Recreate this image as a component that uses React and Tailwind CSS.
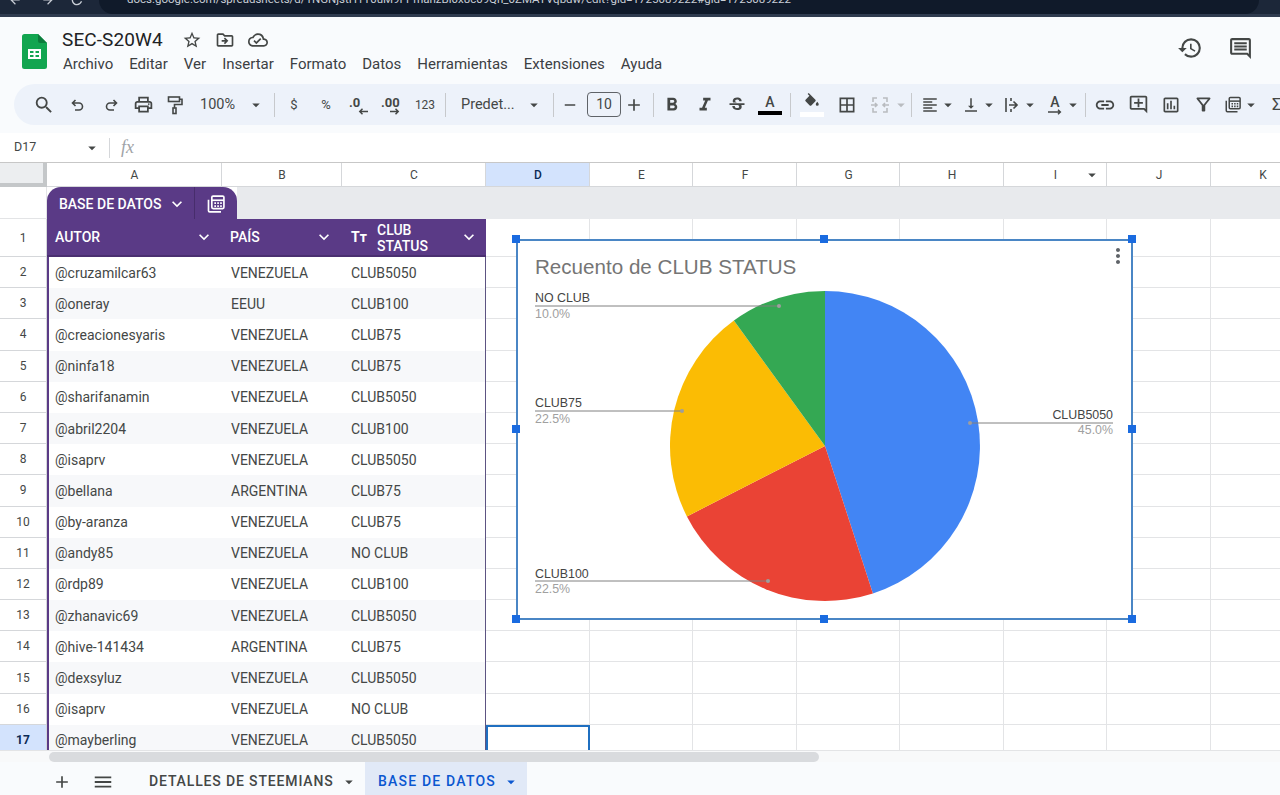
import React from 'react';
import {
  MdSearch, MdOutlinePrint, MdArrowDropDown, MdAdd, MdRemove,
  MdFormatBold, MdFormatItalic, MdStrikethroughS, MdBorderAll, MdFormatAlignLeft, MdVerticalAlignBottom,
  MdLink, MdOutlineAddComment, MdOutlineInsertChart, MdOutlineFilterAlt, MdHistory, MdOutlineComment,
  MdStarBorder, MdOutlineDriveFileMove, MdOutlineCloudDone, MdMenu, MdKeyboardArrowDown, MdMoreVert,
  MdArrowBack, MdArrowForward, MdRefresh,
} from 'react-icons/md';

const Sep = ({ cls = '' }) => (
  <div className={`w-[3px] h-full flex items-center justify-center shrink-0 ${cls}`}>
    <div className="w-px h-[24px] bg-[#c7c9cc]" />
  </div>
);

const B = ({ w, children, cls = '' }) => (
  <div className={`h-full flex items-center justify-center shrink-0 text-[#444746] ${w} ${cls}`}>{children}</div>
);

const Arrow = ({ color = 'text-[#444746]' }) => <MdArrowDropDown size={18} className={`shrink-0 ${color}`} />;

const Group = ({ children, cls = '' }) => (
  <div className={`h-full flex items-center w-[36px] shrink-0 text-[#444746] ${cls}`}>
    <div className="w-[18px] flex justify-center shrink-0">{children}</div>
    <Arrow />
  </div>
);

const FuncIcon = ({ size = 20 }) => (
  <svg width={size} height={size} viewBox="0 0 24 24" fill="none" stroke="currentColor" strokeWidth="2">
    <path d="M3 7v13a1.5 1.5 0 0 0 1.5 1.5H18" />
    <rect x="7" y="2.5" width="14.5" height="15" rx="1.5" />
    <path d="M7 7.5h14.5" />
    <path d="M10 11h2M13.5 11h2M17 11h2M10 14.5h2M13.5 14.5h2M17 14.5h2" strokeWidth="2.2" />
  </svg>
);

const UndoIcon = () => (
  <svg width="18" height="18" viewBox="0 0 18 18" fill="none" stroke="currentColor" strokeWidth="1.6">
    <path d="M6.5 4 3.5 7l3 3M3.5 7h6.5a3.5 3.5 0 0 1 0 7H6" />
  </svg>
);
const RedoIcon = () => (
  <svg width="18" height="18" viewBox="0 0 18 18" fill="none" stroke="currentColor" strokeWidth="1.6">
    <path d="M11.5 4l3 3-3 3M14.5 7H8a3.5 3.5 0 0 0 0 7h4" />
  </svg>
);
const RollerIcon = () => (
  <svg width="20" height="20" viewBox="0 0 20 20" fill="none" stroke="currentColor" strokeWidth="1.6">
    <rect x="3.5" y="2" width="11" height="4.5" />
    <path d="M14.5 4.2h2.5v5.3H9.5v3.5" />
    <rect x="8" y="13" width="3" height="5.5" />
  </svg>
);

const DecLess = () => (
  <div className="relative w-[20px] h-[20px] text-[#444746]">
    <span className="absolute left-0 top-0 text-[13px] leading-[16px] font-bold">.0</span>
    <svg className="absolute left-[9px] top-[13px]" width="10" height="7" viewBox="0 0 10 7" fill="none" stroke="currentColor" strokeWidth="1.5"><path d="M10 3.5H2M4.5 .8 1.8 3.5l2.7 2.7" /></svg>
  </div>
);
const DecMore = () => (
  <div className="relative w-[20px] h-[20px] text-[#444746]">
    <span className="absolute -left-px top-0 text-[13px] leading-[16px] font-bold">.00</span>
    <svg className="absolute left-[8px] top-[13px]" width="10" height="7" viewBox="0 0 10 7" fill="none" stroke="currentColor" strokeWidth="1.5"><path d="M0 3.5h8M5.5 .8l2.7 2.7-2.7 2.7" /></svg>
  </div>
);

const MergeIcon = () => (
  <svg width="20" height="20" viewBox="0 0 20 20" fill="none" stroke="#b9bcc0" strokeWidth="1.6">
    <path d="M7 3H3v4M13 3h4v4M7 17H3v-4M13 17h4v-4M1 10h6M5 8l2 2-2 2M19 10h-6M15 8l-2 2 2 2" />
  </svg>
);
const WrapIcon = () => (
  <svg width="18" height="18" viewBox="0 0 18 18" fill="none" stroke="currentColor" strokeWidth="1.6">
    <path d="M3 2v14M6 9h8M10.5 5.5 14 9l-3.5 3.5M8 2v3M8 13v3" />
  </svg>
);
const RotateIcon = () => (
  <div className="relative w-[18px] h-[20px] flex justify-center">
    <span className="text-[14px] leading-[15px] font-medium">A</span>
    <svg className="absolute left-[2px] top-[14px]" width="16" height="6" viewBox="0 0 16 6" fill="none" stroke="currentColor" strokeWidth="1.4"><path d="M0 3h12M10 .8 12.4 3 10 5.2" /></svg>
  </div>
);
const FillIcon = () => (
  <div className="flex flex-col items-center">
    <svg width="18" height="18" viewBox="0 0 24 24" fill="#444746">
      <path d="M16.56 8.94 7.62 0 6.21 1.41l2.38 2.38-5.15 5.15a1.49 1.49 0 0 0 0 2.12l5.5 5.5c.29.29.68.44 1.06.44s.77-.15 1.06-.44l5.5-5.5c.59-.58.59-1.53 0-2.12zM19 11.5s-2 2.17-2 3.5a2 2 0 0 0 4 0c0-1.33-2-3.5-2-3.5z" />
    </svg>
    <div className="w-[24px] h-[5px] bg-white mt-[1px]" />
  </div>
);

const Toolbar = () => (
  <div className="ml-[14px] h-[41px] bg-[#edf2fa] rounded-l-full flex items-center pl-[13px] text-[#444746] shrink-0">
    <B w="w-[34px]"><MdSearch size={22} /></B>
    <B w="w-[33px]"><UndoIcon /></B>
    <B w="w-[33px]"><RedoIcon /></B>
    <B w="w-[33px]"><MdOutlinePrint size={21} /></B>
    <B w="w-[30px]"><RollerIcon /></B>
    <B w="w-[49px]" cls="pl-[10px] text-[14.5px] !justify-start">100%</B>
    <B w="w-[34px]"><Arrow /></B>
    <Sep />
    <B w="w-[36px]" cls="text-[13px]">$</B>
    <B w="w-[28px]" cls="text-[13px]">%</B>
    <B w="w-[38px]"><DecLess /></B>
    <B w="w-[28px]"><DecMore /></B>
    <B w="w-[38px]" cls="text-[12px]">123</B>
    <Sep />
    <B w="w-[78px]" cls="pl-[14px] text-[14.5px] !justify-start">Predet...</B>
    <B w="w-[18px]"><Arrow /></B>
    <Sep cls="ml-[9px]" />
    <B w="w-[30px]"><MdRemove size={18} /></B>
    <div className="ml-[2px] w-[34px] h-[25px] border border-[#5f6368] rounded-[4px] flex items-center justify-center text-[14px] shrink-0">10</div>
    <B w="w-[26px]"><MdAdd size={20} /></B>
    <Sep cls="ml-[5px]" />
    <B w="w-[34px]"><MdFormatBold size={22} /></B>
    <B w="w-[32px]"><MdFormatItalic size={22} /></B>
    <B w="w-[32px]"><MdStrikethroughS size={20} /></B>
    <B w="w-[34px]">
      <div className="flex flex-col items-center">
        <span className="text-[14px] leading-[15px] font-medium">A</span>
        <div className="w-[24px] h-[4px] bg-black mt-[1px]" />
      </div>
    </B>
    <Sep cls="ml-[2px]" />
    <B w="w-[40px]"><FillIcon /></B>
    <B w="w-[30px]"><MdBorderAll size={20} /></B>
    <B w="w-[35px]"><MergeIcon /></B>
    <B w="w-[8px]"><Arrow color="text-[#b9bcc0]" /></B>
    <Sep cls="ml-[5px]" />
    <Group cls="ml-[8px]"><MdFormatAlignLeft size={20} /></Group>
    <Group cls="ml-[5px]"><MdVerticalAlignBottom size={20} /></Group>
    <Group cls="ml-[5px]"><WrapIcon /></Group>
    <Group cls="ml-[7px]"><RotateIcon /></Group>
    <Sep cls="ml-[2px]" />
    <B w="w-[35px]"><MdLink size={22} /></B>
    <B w="w-[32px]"><MdOutlineAddComment size={21} /></B>
    <B w="w-[33px]"><MdOutlineInsertChart size={20} /></B>
    <B w="w-[32px]"><MdOutlineFilterAlt size={21} /></B>
    <Group cls="ml-[5px]"><FuncIcon size={19} /></Group>
    <B w="w-[30px]" cls="pl-[12px] !justify-start text-[17px]">Σ</B>
  </div>
);

const columns = ['A', 'B', 'C', 'D', 'E', 'F', 'G', 'H', 'I', 'J', 'K'];
const gridCols = 'grid grid-cols-[47px_175px_120px_144px_104px_103px_104px_103px_104px_103px_104px_104px] w-[1313px]';

const rows = [
  ['@cruzamilcar63', 'VENEZUELA', 'CLUB5050'],
  ['@oneray', 'EEUU', 'CLUB100'],
  ['@creacionesyaris', 'VENEZUELA', 'CLUB75'],
  ['@ninfa18', 'VENEZUELA', 'CLUB75'],
  ['@sharifanamin', 'VENEZUELA', 'CLUB5050'],
  ['@abril2204', 'VENEZUELA', 'CLUB100'],
  ['@isaprv', 'VENEZUELA', 'CLUB5050'],
  ['@bellana', 'ARGENTINA', 'CLUB75'],
  ['@by-aranza', 'VENEZUELA', 'CLUB75'],
  ['@andy85', 'VENEZUELA', 'NO CLUB'],
  ['@rdp89', 'VENEZUELA', 'CLUB100'],
  ['@zhanavic69', 'VENEZUELA', 'CLUB5050'],
  ['@hive-141434', 'ARGENTINA', 'CLUB75'],
  ['@dexsyluz', 'VENEZUELA', 'CLUB5050'],
  ['@isaprv', 'VENEZUELA', 'NO CLUB'],
  ['@mayberling', 'VENEZUELA', 'CLUB5050'],
];

const cellLine = 'border-r border-b border-[#e3e4e6]';

const ColumnHeader = () => (
  <div className={`${gridCols} h-[25px] border-t border-[#c7c7c7] bg-white text-[12px] text-[#444746]`}>
    <div className="bg-[#eceef0] border-r-[4px] border-b-[4px] border-[#c4c7c9]" />
    {columns.map((c) => (
      <div
        key={c}
        className={`relative flex items-center justify-center pl-px border-r border-b border-[#d5d7da] ${c === 'D' ? 'bg-[#d3e3fd] font-medium text-[#0b2a55]' : ''}`}
      >
        {c}
        {c === 'I' && <MdArrowDropDown size={18} className="absolute right-[5px] top-[3px]" />}
      </div>
    ))}
  </div>
);

const EmptyCells = ({ selected }) => (
  <>
    <div className={selected ? 'border-2 border-[#1f6fc0]' : cellLine} />
    {[0, 1, 2, 3, 4, 5, 6].map((i) => <div key={i} className={cellLine} />)}
  </>
);

const HeaderCell = ({ label, cls = '', chevron }) => (
  <div className={`bg-[#5a3a86] border-b-2 border-[#4a2f70] flex items-center text-white text-[14px] font-medium ${cls}`}>
    <span className="pt-px">{label}</span>
    <MdKeyboardArrowDown size={20} className={`ml-auto ${chevron}`} />
  </div>
);

const Chart = () => {
  const handles = [
    'left-[-6px] top-[-6px]', 'left-[302px] top-[-6px]', 'right-[-5px] top-[-6px]',
    'left-[-6px] top-[184px]', 'right-[-5px] top-[184px]',
    'left-[-6px] bottom-[-5px]', 'left-[302px] bottom-[-5px]', 'right-[-5px] bottom-[-5px]',
  ];
  const lbl = { fontFamily: '"Liberation Sans", Arial, sans-serif', fontSize: 12.4 };
  return (
    <div className="absolute left-[516px] top-[52px] w-[617px] h-[381px] bg-white border-2 border-[#4a86c5]">
      <svg width="613" height="377" viewBox="518 241 613 377" className="block">
        <text x="535" y="274" fill="#757575" style={{ fontFamily: '"Liberation Sans", Arial, sans-serif', fontSize: 20.6 }}>Recuento de CLUB STATUS</text>
        <path d="M825 446V291A155 155 0 0 1 872.9 593.4Z" fill="#4285f4" />
        <path d="M825 446 872.9 593.4A155 155 0 0 1 686.9 516.4Z" fill="#ea4335" />
        <path d="M825 446 686.9 516.4A155 155 0 0 1 733.9 320.6Z" fill="#fbbc04" />
        <path d="M825 446 733.9 320.6A155 155 0 0 1 825 291Z" fill="#34a853" />

        <path d="M535 306H779" stroke="#808080" strokeWidth="1" />
        <circle cx="779" cy="306" r="2" fill="#9e9e9e" />
        <text x="535" y="302" fill="#444" style={lbl}>NO CLUB</text>
        <text x="535" y="318" fill="#a0a0a0" style={lbl}>10.0%</text>

        <path d="M535 411H682" stroke="#808080" strokeWidth="1" />
        <circle cx="682" cy="411" r="2" fill="#9e9e9e" />
        <text x="535" y="407" fill="#444" style={lbl}>CLUB75</text>
        <text x="535" y="423" fill="#a0a0a0" style={lbl}>22.5%</text>

        <path d="M535 581H768" stroke="#808080" strokeWidth="1" />
        <circle cx="768" cy="581" r="2" fill="#9e9e9e" />
        <text x="535" y="578" fill="#444" style={lbl}>CLUB100</text>
        <text x="535" y="593" fill="#a0a0a0" style={lbl}>22.5%</text>

        <path d="M970 423H1113" stroke="#808080" strokeWidth="1" />
        <circle cx="970" cy="423" r="2" fill="#9e9e9e" />
        <text x="1113" y="419" textAnchor="end" fill="#444" style={lbl}>CLUB5050</text>
        <text x="1113" y="434" textAnchor="end" fill="#a0a0a0" style={lbl}>45.0%</text>
      </svg>
      <MdMoreVert size={24} className="absolute right-[1px] top-[3px] text-[#5f6368]" />
      {handles.map((h) => (
        <span key={h} className={`absolute w-[8px] h-[8px] bg-[#1a6be0] ${h}`} />
      ))}
    </div>
  );
};

export default function App() {
  return (
    <div className="w-[1280px] h-[795px] overflow-hidden bg-[#f9fbfd] flex flex-col font-['Roboto',sans-serif] text-[#444746]">
      {/* browser chrome, cut off at the top */}
      <div className="h-[17px] bg-[#1c2739] border-b-[3px] border-[#2f3b4f] overflow-hidden shrink-0">
        <div className="h-[28px] -mt-[14px] flex items-center text-[#c9ced6]">
          <MdArrowBack size={14} className="ml-[8px]" />
          <MdArrowForward size={14} className="ml-[19px]" />
          <MdRefresh size={16} className="ml-[14px]" />
          <div className="ml-[14px] w-[1160px] h-[28px] bg-[#101a2a] rounded-full pl-[28px] flex items-center text-[11.5px] whitespace-nowrap">
            docs.google.com/spreadsheets/d/1NGNjstH1T0uM9FPmanzBl0x8c09Qn_0ZMAYVqbdw/edit?gid=1725089222#gid=1725089222
          </div>
        </div>
      </div>

      {/* title and menu */}
      <div className="h-[67px] pt-[11px] flex shrink-0">
        <svg className="ml-[22px] mt-[6px] shrink-0" width="25" height="35" viewBox="0 0 25 35">
          <path d="M2.5 0H16l9 9v23.5a2.5 2.5 0 0 1-2.5 2.5h-20A2.5 2.5 0 0 1 0 32.5v-30A2.5 2.5 0 0 1 2.5 0z" fill="#12a550" />
          <path d="M16 0l9 9h-7a2 2 0 0 1-2-2z" fill="#0c7c3c" />
          <path d="M6 15h13v10H6zm2 2v2h3.5v-2zm5.5 0v2H17v-2zM8 21v2h3.5v-2zm5.5 0v2H17v-2z" fill="#fff" fillRule="evenodd" />
        </svg>
        <div className="ml-[15px]">
          <div className="h-[24px] flex items-center text-[#202124]">
            <span className="text-[19px] w-[120px] tracking-[0.1px]">SEC-S20W4</span>
            <MdStarBorder size={20} className="text-[#444746]" />
            <MdOutlineDriveFileMove size={20} className="ml-[13px] text-[#444746]" />
            <MdOutlineCloudDone size={20} className="ml-[13px] text-[#444746]" />
          </div>
          <div className="h-[24px] flex items-center gap-[16px] pl-px pt-px text-[15px] text-[#3c4043]">
            {['Archivo', 'Editar', 'Ver', 'Insertar', 'Formato', 'Datos', 'Herramientas', 'Extensiones', 'Ayuda'].map((m) => (
              <span key={m}>{m}</span>
            ))}
          </div>
        </div>
        <div className="ml-auto flex h-[40px] items-center gap-[25px] pr-[27px] text-[#444746]">
          <MdHistory size={26} />
          <MdOutlineComment size={25} />
        </div>
      </div>

      <Toolbar />
      <div className="h-[8px] shrink-0" />

      {/* formula bar */}
      <div className="h-[29px] bg-white flex items-center shrink-0 text-[#444746]">
        <span className="ml-[14px] w-[69px] text-[12.5px]">D17</span>
        <MdArrowDropDown size={18} className="shrink-0" />
        <div className="ml-[8px] w-px h-[20px] bg-[#d5d7da]" />
        <span className="ml-[11px] font-['Liberation_Serif',serif] italic text-[18px] text-[#a0a3a7]">fx</span>
      </div>

      <ColumnHeader />

      {/* sheet */}
      <div className="relative h-[563px] overflow-hidden bg-white shrink-0">
        <div className="h-[32px] flex">
          <div className="w-[47px] border-b border-[#e3e4e6] border-r" />
          <div className="w-[190px] bg-[#5a3a86] rounded-t-[14px] flex text-white">
            <div className="w-[148px] flex items-center pl-[12px] pt-[2px] text-[14px] font-medium border-r border-[#472d6c]">
              BASE DE DATOS
              <MdKeyboardArrowDown size={20} className="ml-auto mr-[7px]" />
            </div>
            <div className="flex-1 flex items-center justify-center pt-[2px]"><FuncIcon size={20} /></div>
          </div>
          <div className="flex-1 bg-[#e8eaed]" />
        </div>

        <div className={`${gridCols} h-[38px]`}>
          <div className="flex items-center justify-center text-[12px] border-r border-b border-[#d5d7da]">1</div>
          <HeaderCell label="AUTOR" cls="pl-[8px]" chevron="mr-[8px]" />
          <HeaderCell label="PAÍS" cls="pl-[8px]" chevron="mr-[8px]" />
          <div className="bg-[#5a3a86] border-b-2 border-[#4a2f70] flex items-center text-white text-[14px] font-medium">
            <span className="ml-[9px] text-[14px] font-bold w-[26px]">Tт</span>
            <span className="leading-[16px] w-[60px] pt-px">CLUB STATUS</span>
            <MdKeyboardArrowDown size={20} className="ml-auto mr-[7px]" />
          </div>
          <EmptyCells />
        </div>

        {rows.map((r, i) => {
          const n = i + 2;
          const alt = i % 2 === 1;
          const last = n === 17;
          return (
            <div key={n} className={`${gridCols} h-[31.2px]`}>
              <div className={`flex items-center justify-center text-[12px] border-r border-b border-[#d5d7da] ${last ? 'bg-[#d3e3fd] font-bold text-[#0b2a55]' : ''}`}>{n}</div>
              <div className={`flex items-center pl-[6px] pt-px text-[14px] border-l-2 border-[#5a3a86] ${alt ? 'bg-[#f7f8fa]' : 'bg-white'}`}>{r[0]}</div>
              <div className={`flex items-center pl-[9px] pt-px text-[14px] ${alt ? 'bg-[#f7f8fa]' : 'bg-white'}`}>{r[1]}</div>
              <div className={`flex items-center pl-[9px] pt-px text-[14px] border-r border-[#5d5482] ${alt ? 'bg-[#f7f8fa]' : 'bg-white'}`}>{r[2]}</div>
              <EmptyCells selected={last} />
            </div>
          );
        })}

        <Chart />
      </div>

      {/* horizontal scrollbar */}
      <div className="h-[12px] bg-[#f8f9fa] border-t border-[#e3e4e6] flex items-center shrink-0">
        <div className="ml-[49px] w-[770px] h-[10px] bg-[#d9dbde] rounded-full" />
      </div>

      {/* sheet tabs */}
      <div className="flex-1 flex items-stretch bg-[#f9fbfd]">
        <div className="w-[50px] shrink-0" />
        <div className="w-[24px] flex items-center justify-center pt-[6px]"><MdAdd size={20} /></div>
        <div className="w-[17px]" />
        <div className="w-[24px] flex items-center justify-center pt-[6px]"><MdMenu size={22} /></div>
        <div className="w-[22px]" />
        <div className="w-[228px] flex items-center pl-[12px] pt-[6px] text-[14px] font-medium tracking-[0.85px]">
          DETALLES DE STEEMIANS
          <MdArrowDropDown size={18} className="ml-[6px]" />
        </div>
        <div className="w-[162px] bg-[#e1e9f7] flex items-center pl-[13px] pt-[6px] text-[14px] font-medium tracking-[1.2px] text-[#0b57d0]">
          BASE DE DATOS
          <MdArrowDropDown size={18} className="ml-[6px]" />
        </div>
      </div>
    </div>
  );
}
